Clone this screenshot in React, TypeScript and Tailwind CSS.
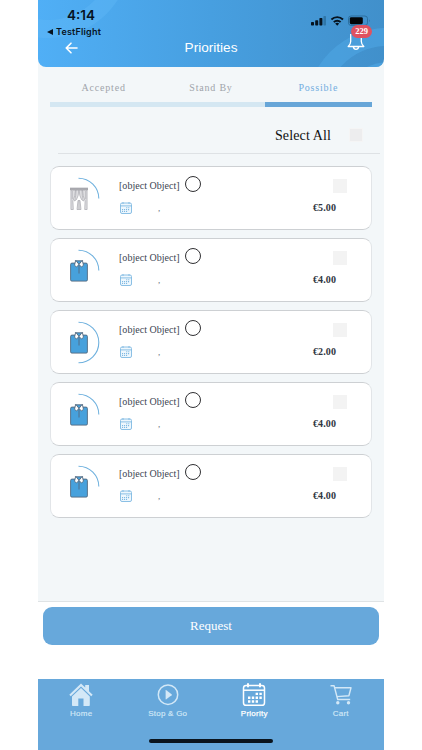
import { useState } from 'react'

interface Item {
  id: number;
  kind: 'curtain' | 'shirt';
  price: string;
  half?: boolean;
}

const items: Item[] = [
  { id: 1, kind: 'curtain', price: '€5.00' },
  { id: 2, kind: 'shirt', price: '€4.00' },
  { id: 3, kind: 'shirt', price: '€2.00', half: true },
  { id: 4, kind: 'shirt', price: '€4.00' },
  { id: 5, kind: 'shirt', price: '€4.00' },
]

const tabs = ['Accepted', 'Stand By', 'Possible']

function StatusIcons() {
  return (
    <svg width="60" height="12" viewBox="0 0 60 12">
      <rect x="0" y="7" width="3" height="3.5" rx="0.7" fill="#06131f" />
      <rect x="4.2" y="5.3" width="3" height="5.2" rx="0.7" fill="#06131f" />
      <rect x="8.4" y="3" width="3" height="7.5" rx="0.7" fill="#06131f" />
      <rect x="12.4" y="1" width="2.6" height="9.5" rx="0.7" fill="#2f76a8" />
      <g fill="none" stroke="#06131f" strokeWidth="1.9">
        <path d="M20.4 4.5a8.3 8.3 0 0 1 11.6 0" />
        <path d="M22.8 7.1a4.8 4.8 0 0 1 6.8 0" />
      </g>
      <path d="M24.2 8.6a2.9 2.9 0 0 1 4 0l-2 2.1z" fill="#06131f" />
      <rect x="37.5" y="1" width="19" height="9.4" rx="2.6" fill="none" stroke="#2c6f9f" strokeWidth="1" />
      <rect x="38.8" y="2.2" width="13" height="7" rx="1.4" fill="#020508" />
      <path d="M58 4.2q1.4 1.5 0 3z" fill="#2c6f9f" />
    </svg>
  )
}

function Curtain() {
  return (
    <svg width="18" height="24" viewBox="0 0 18 24" fill="#dedee1" stroke="#9c9ca2" strokeWidth="0.6">
      <path d="M.9 3h4.600q0 6-2.600 11l.4 8.500H.9V14z" />
      <path d="M17.100 3h-4.600q0 6 2.600 11l-.4 8.500h2.400V14z" />
      <path d="M6 3h2.800q0 6-2.300 9.500L4.500 14Q6 9 6 3z" />
      <path d="M12 3H9.200q0 6 2.300 9.500l2 1.500Q12 9 12 3z" />
      <path d="M8 13.500h2l1 9H7z" />
      <path d="M2.300 4v8M15.700 4v8M9 14v8" fill="none" strokeWidth="0.5" />
      <rect x="0.300" y="1" width="17.400" height="1.800" fill="#adadb2" />
    </svg>
  )
}

function Shirt() {
  return (
    <svg width="18" height="24" viewBox="0 0 18 24" stroke="#526a80" strokeWidth="0.9" strokeLinejoin="round">
      <path d="M2 4.1h14q1.4 0 1.4 1.4v15.4q0 1.2-1.4 1.2H2q-1.4 0-1.4-1.2V5.5q0-1.4 1.4-1.4z" fill="#47a1dc" />
      <path d="M5.5 1.8h7L9 5.6z" fill="#47a1dc" />
      <path d="M5.700 1.300l-1.200 5L6.600 8 9 5.400z" fill="#fff" />
      <path d="M12.300 1.300l1.200 5L11.400 8 9 5.400z" fill="#fff" />
      <path d="M9 5.500v9" fill="none" />
    </svg>
  )
}

function SmallCalendar() {
  return (
    <svg className="ml-px" width="12" height="12" viewBox="0 0 12 12" fill="none" stroke="#7fb9e2" strokeWidth="0.9">
      <rect x="0.5" y="1" width="11" height="10.5" rx="1.5" fill="#eef7fd" />
      <path d="M.5 3.9h11M3 0v2M9 0v2" />
      <path d="M6.200 5.700h3.800M2 7.600h8M2 9.500h6" strokeWidth="1.1" strokeDasharray="1.1 0.9" />
    </svg>
  )
}

function ItemCard({ item }: { item: Item }) {
  return (
    <div className="flex h-[64px] w-[322px] rounded-[9px] border border-[#cdd0d3] border-x-[#e2e5e8] bg-white">
      <div className="relative ml-1.5 mt-[10px] flex h-[43px] w-[43px] items-center justify-center">
        <svg className="absolute inset-0" width="43" height="43" fill="none" stroke="#6fb1de" strokeWidth="1.1">
          <path d={item.half ? 'M21.5 1.2a20.3 20.3 0 0 1 0 40.6' : 'M21.5 1.2a20.3 20.3 0 0 1 20.3 20.3'} />
        </svg>
        {item.kind === 'curtain' ? <Curtain /> : <Shirt />}
      </div>
      <div className="ml-[19px] flex flex-1 flex-col">
        <div className="mt-[9px] flex h-[16px] items-center text-[10px] text-[#3c4552]">
          <span className="mt-[2px] w-[61px] whitespace-nowrap tracking-[0.03px]">[object Object]</span>
          <span className="ml-[5px] h-[16px] w-[16px] rounded-full border-[1.5px] border-[#303033]" />
        </div>
        <div className="mt-[10px] flex items-center">
          <SmallCalendar />
          <span className="ml-[26px] text-[9px] leading-[12px] text-[#666e77]">,</span>
        </div>
      </div>
      <div className="mr-[24px] flex w-[35px] flex-col items-end">
        <span className="mt-[12px] h-[14px] w-[14px] bg-[#f3f3f3]" />
        <span className="mr-[11px] mt-[8px] text-[10px] font-bold leading-[13px] tracking-[0.1px] text-[#303641]">{item.price}</span>
      </div>
    </div>
  )
}

function HomeIcon() {
  return (
    <svg width="24" height="24" viewBox="0 0 24 24" fill="#d3e8f7">
      <path d="M12 .5L.3 11.700l1.500 1.500L12 3.500l10.200 9.700 1.500-1.500-3.700-3.500V2h-3.800v2.500z" />
      <path d="M12 5L3 13.500v8.700q0 .8.800.8h5.500v-7.500h5.200V23H20q.8 0 .8-.8v-8.700z" />
    </svg>
  )
}

function PlayIcon() {
  return (
    <svg width="24" height="24" viewBox="0 0 24 24">
      <circle cx="12" cy="11.7" r="9.7" fill="none" stroke="#d3e8f7" strokeWidth="1.5" />
      <path d="M9.600 7.500q0-.8.7-.3l5.300 4q.5.500 0 1l-5.300 4q-.7.500-.7-.3z" fill="#d3e8f7" />
    </svg>
  )
}

function CalendarIcon() {
  return (
    <svg width="24" height="24" viewBox="0 0 24 24" fill="none" stroke="#fff" strokeWidth="1.5">
      <rect x="1.5" y="2.5" width="21" height="19.8" rx="2.6" />
      <path d="M1.5 7.2h21" />
      <path d="M6 1v2.500M18 1v2.500" strokeWidth="2" strokeLinecap="round" />
      <path d="M13.600 10.900h6.500M6 14.700h14M6 18.500h10.500" strokeWidth="2.4" strokeDasharray="2.4 1.4" />
    </svg>
  )
}

function CartIcon() {
  return (
    <svg width="24" height="24" viewBox="0 0 24 24" fill="none" stroke="#d3e8f7" strokeWidth="1.4" strokeLinejoin="round">
      <path d="M1.500 2.700h3.600l3.600 13.800h12.500" />
      <path d="M5.800 4.800h16.200l-2.100 7.900L8 13.600" />
      <circle cx="8.8" cy="19.8" r="1.7" fill="#d3e8f7" stroke="none" />
      <circle cx="19.5" cy="19.8" r="1.7" fill="#d3e8f7" stroke="none" />
    </svg>
  )
}

const navItems = [
  { label: 'Home', icon: <HomeIcon /> },
  { label: 'Stop & Go', icon: <PlayIcon /> },
  { label: 'Priority', icon: <CalendarIcon /> },
  { label: 'Cart', icon: <CartIcon /> },
]

export default function App() {
  const [tab, setTab] = useState('Possible')

  return (
    <div className="flex h-[750px] w-[422px] justify-center bg-white font-['Liberation_Serif',serif]">
      <div className="flex h-full w-[346px] flex-col">
        <div className="bg-[#f3f7f9]">
          {/* header */}
          <header className="relative h-[67px] overflow-hidden rounded-b-[8px] bg-linear-to-r from-[#50aff6] via-[#479fe0] to-[#4190cb]">
            <svg className="absolute inset-0" width="346" height="67" fill="none">
              <circle cx="10" cy="-45" r="74" stroke="#62b9f7" strokeOpacity="0.4" strokeWidth="18" />
              <circle cx="350" cy="110" r="73" stroke="#4da5e2" strokeOpacity="0.65" strokeWidth="18" />
              <circle cx="350" cy="110" r="48" fill="#4da5e2" fillOpacity="0.7" />
            </svg>
            <div className="relative flex h-[37px] justify-between font-['Inter',sans-serif] text-[#06131f]">
              <div className="ml-[9px] mt-[8px] flex w-[60px] flex-col">
                <span className="ml-[20px] text-[13.5px] font-semibold leading-[15px]">4:14</span>
                <span className="mt-[3px] flex items-center whitespace-nowrap text-[9px] font-semibold leading-[11px] tracking-[0.2px]">
                  <svg className="mr-[3px]" width="6" height="6" viewBox="0 0 6 6"><path d="M0 3l6-3v6z" fill="#06131f" /></svg>
                  TestFlight
                </span>
              </div>
              <div className="mr-[13px] mt-[15px]"><StatusIcons /></div>
            </div>
            <div className="relative flex h-[22px] items-center justify-between">
              <svg className="ml-[27px]" width="13" height="12" viewBox="0 0 13 12" fill="none" stroke="#fff" strokeWidth="1.6" strokeLinecap="round" strokeLinejoin="round">
                <path d="M12 6H1.200M6 1.200L1.200 6 6 10.800" />
              </svg>
              <h1 className="mr-[3px] font-['Liberation_Sans',sans-serif] text-[13.6px] text-white">Priorities</h1>
              <div className="relative mb-[12px] mr-[19px] h-[18px] w-[18px]">
                <svg width="18" height="18" viewBox="0 0 18 18" fill="none" stroke="#fff" strokeWidth="1.3" strokeLinejoin="round">
                  <path d="M3.700 1v7.500q0 2.500-2.500 5h15.600q-2.500-2.500-2.500-5V1M6.300 13.700q.4 2.700 2.700 2.700t2.700-2.700" />
                </svg>
                <span className="absolute -top-[8px] left-[4px] flex h-[13px] w-[21px] items-center justify-center rounded-full bg-[#df5260] text-[8.5px] font-bold text-white">229</span>
              </div>
            </div>
          </header>
        </div>

        <main className="flex h-[535px] flex-col border-b border-[#dfe3e5] bg-[#f3f7f9] pl-[12px]">
          <div className="flex w-[322px]">
            {tabs.map((t) => (
              <button
                key={t}
                onClick={() => setTab(t)}
                className={t === tab
                  ? 'h-[40px] flex-1 border-b-[5px] border-[#67a6d8] pt-[5px] text-[10px] tracking-[0.8px] text-[#72ade0]'
                  : 'h-[40px] flex-1 border-b-[5px] border-[#d4e7f2] pt-[5px] text-[10px] tracking-[0.8px] text-[#a0a4aa]'}
              >
                {t}
              </button>
            ))}
          </div>
          <div className="ml-[8px] flex h-[47px] w-[322px] items-center justify-end border-b border-[#dee2e5] pr-[17px] pt-[10px]">
            <span className="text-[14px] tracking-[0.12px] text-[#111]">Select All</span>
            <span className="ml-[18px] h-[14px] w-[14px] border border-[#f5f5f5] bg-[#ededee]" />
          </div>
          <div className="mt-[12px] flex flex-col gap-[8px]">
            {items.map((item) => (
              <ItemCard key={item.id} item={item} />
            ))}
          </div>
        </main>

        <div className="flex h-[77px] justify-center pt-[5px]">
          <button className="h-[38px] w-[336px] rounded-[9px] bg-[#67a8db] text-[13px] text-white">Request</button>
        </div>

        {/* bottom nav */}
        <nav className="flex h-[71px] flex-col bg-[#67a8db] font-['Liberation_Sans',sans-serif]">
          <div className="flex h-[60px] pt-[4px]">
            {navItems.map((n) => (
              <div
                key={n.label}
                className={n.label === 'Priority'
                  ? 'flex flex-1 flex-col items-center text-[8px] tracking-[0.25px] text-white [-webkit-text-stroke:0.25px_#fff]'
                  : 'flex flex-1 flex-col items-center text-[8px] tracking-[0.25px] text-[#d3e8f7] [-webkit-text-stroke:0.15px_#d3e8f7]'}
              >
                {n.icon}
                <span className="mt-[2px] leading-[10px]">{n.label}</span>
              </div>
            ))}
          </div>
          <div className="mx-auto h-[4px] w-[124px] rounded-full bg-[#0a141d]" />
        </nav>
      </div>
    </div>
  )
}
